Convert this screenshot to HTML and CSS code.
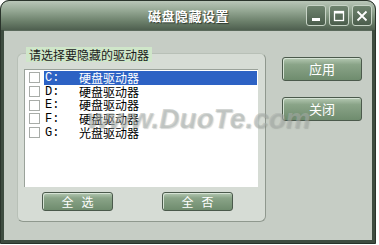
FILE: index.html
```html
<!DOCTYPE html>
<html lang="zh-CN">
<head>
    <meta charset="UTF-8">
    <title>磁盘隐藏设置</title>
    <link rel="stylesheet" href="styles.css">
</head>
<body>
    <div class="window">
        <div class="titlebar">
            <span class="title">磁盘隐藏设置</span>
            <div class="controls">
                <span class="ctl">
                    <svg width="14" height="14" viewBox="0 0 14 14"><rect x="3" y="9" width="8" height="3" fill="#fff"/></svg>
                </span>
                <span class="ctl">
                    <svg width="14" height="14" viewBox="0 0 14 14"><rect x="2.5" y="2.5" width="9" height="9" fill="none" stroke="#fff" stroke-width="1.3"/><rect x="2" y="2" width="10" height="2.5" fill="#fff"/></svg>
                </span>
                <span class="ctl">
                    <svg width="14" height="14" viewBox="0 0 14 14"><path d="M2.5 2.5 L11.5 11.5 M11.5 2.5 L2.5 11.5" stroke="#fff" stroke-width="1.8"/></svg>
                </span>
            </div>
        </div>
        <div class="client">
            <div class="group">
                <span class="legend">请选择要隐藏的驱动器</span>
                <ul class="drives">
                    <li class="drive selected"><span class="check"></span><span class="letter">C:</span><span class="kind">硬盘驱动器</span></li>
                    <li class="drive"><span class="check"></span><span class="letter">D:</span><span class="kind">硬盘驱动器</span></li>
                    <li class="drive"><span class="check"></span><span class="letter">E:</span><span class="kind">硬盘驱动器</span></li>
                    <li class="drive"><span class="check"></span><span class="letter">F:</span><span class="kind">硬盘驱动器</span></li>
                    <li class="drive"><span class="check"></span><span class="letter">G:</span><span class="kind">光盘驱动器</span></li>
                </ul>
                <div class="group-buttons">
                    <button class="btn small">全&nbsp;&nbsp;&nbsp;选</button>
                    <button class="btn small">全&nbsp;&nbsp;&nbsp;否</button>
                </div>
            </div>
            <div class="side-buttons">
                <button class="btn wide">应用</button>
                <button class="btn wide">关闭</button>
            </div>
        </div>
        <div class="watermark">www.DuoTe.com</div>
    </div>
</body>
</html>
```

FILE: styles.css
```css
body {
    margin: 0;
    background-color: #ffffff;
    font-family: "Noto Sans CJK SC", "DejaVu Sans", sans-serif;
    font-size: 12px;
}
.window {
    position: relative;
    width: 376px;
    height: 244px;
    box-sizing: border-box;
    background-color: #3e4c40;
    border: 1px solid #2a342b;
    border-radius: 9px 9px 0 0;
    padding: 0 3px 3px 3px;
    display: flex;
    flex-direction: column;
    overflow: hidden;
}
.titlebar {
    height: 29px;
    margin: 0 -3px;
    padding: 0 4px 0 10px;
    display: flex;
    align-items: center;
    justify-content: center;
    position: relative;
    background: linear-gradient(to bottom, #b9c6b8 0%, #93a692 35%, #6c806b 70%, #4e5f4f 100%);
    border-radius: 8px 8px 0 0;
}
.title {
    color: #ffffff;
    font-weight: bold;
    font-size: 13px;
    letter-spacing: 0.5px;
    text-shadow: 1px 1px 1px #2f3a30;
    margin-left: -5px;
}
.controls {
    position: absolute;
    right: 3px;
    top: 4px;
    display: flex;
    gap: 3px;
}
.ctl {
    width: 18px;
    height: 19px;
    border: 1px solid #c7d3c6;
    border-radius: 3px;
    background: linear-gradient(to bottom, #6f846f, #4b5d4c);
    display: flex;
    align-items: center;
    justify-content: center;
}
.client {
    flex: 1;
    background-color: #c6cdc5;
    display: flex;
    align-items: flex-start;
    border-top: 1px solid #5b6a5c;
}
.group {
    position: relative;
    margin: 22px 0 0 13px;
    width: 249px;
    height: 169px;
    box-sizing: border-box;
    background-color: #d6dcd5;
    border: 1px solid #b8c0b7;
    border-right-color: #8f988e;
    border-bottom-color: #8f988e;
    border-radius: 6px;
    padding: 15px 0 0 6px;
}
.legend {
    position: absolute;
    left: 8px;
    top: -7px;
    padding: 0 3px;
    height: 15px;
    line-height: 15px;
    background-color: #cfe6c9;
    color: #1b1b1b;
    font-size: 12px;
}
.drives {
    list-style: none;
    margin: 0;
    padding: 1px 0 0 0;
    width: 234px;
    height: 118px;
    box-sizing: border-box;
    background-color: #ffffff;
    border-top: 1px solid #9aa29a;
    border-left: 1px solid #9aa29a;
}
.drive {
    height: 13.7px;
    display: flex;
    align-items: center;
    color: #000000;
}
.check {
    width: 9px;
    height: 9px;
    border: 1px solid #a8aca8;
    background-color: #ffffff;
    margin: 0 4px 0 4px;
    flex-shrink: 0;
}
.letter {
    width: 34px;
    height: 14px;
    line-height: 14px;
    padding-left: 1px;
    font-family: "Liberation Mono", monospace;
    font-size: 12px;
}
.kind {
    height: 14px;
    line-height: 14px;
    flex: 1;
}
.drive.selected .letter,
.drive.selected .kind {
    background-color: #2d62c4;
    color: #ffffff;
}
.drive.selected .kind {
    margin-right: 1px;
}
.group-buttons {
    display: flex;
    gap: 49px;
    margin: 5px 0 0 18px;
}
.btn {
    height: 19px;
    padding: 0;
    box-sizing: border-box;
    border: 1px solid #4b5a4c;
    border-radius: 3px;
    background: linear-gradient(to bottom, #b5c9b3 0%, #8aa488 30%, #6f8c6e 100%);
    box-shadow: inset 1px 1px 0 #d5e2d4;
    color: #ffffff;
    font-family: "Noto Sans CJK SC", sans-serif;
    font-size: 12px;
    line-height: 16px;
}
.btn.small {
    width: 71px;
}
.side-buttons {
    display: flex;
    flex-direction: column;
    gap: 16px;
    margin: 26px 0 0 16px;
}
.btn.wide {
    width: 80px;
    height: 24px;
    font-size: 13px;
}
.watermark {
    position: absolute;
    left: 86px;
    top: 104px;
    font-family: "Liberation Sans", sans-serif;
    font-weight: bold;
    font-style: italic;
    font-size: 28px;
    line-height: 1;
    color: rgba(170, 176, 172, 0.5);
    text-shadow: 1px 1px 1px rgba(120, 125, 120, 0.3);
    pointer-events: none;
}
```
